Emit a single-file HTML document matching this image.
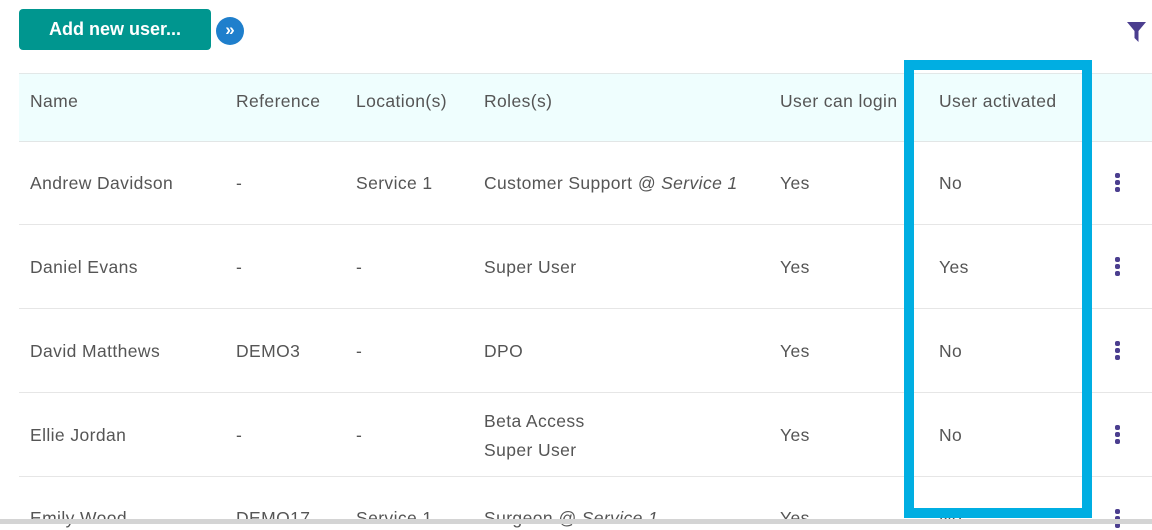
<!DOCTYPE html>
<html><head><style>
body{margin:0;width:1152px;height:524px;overflow:hidden;background:#fff;font-family:"Liberation Sans",sans-serif;color:#555;position:relative}
.btn{position:absolute;left:19px;top:9px;width:192px;height:41px;background:#00968f;border-radius:4px;color:#fff;font-weight:bold;font-size:18px;line-height:41px;text-align:center}
.circ{position:absolute;left:216px;top:17px;width:28px;height:28px;border-radius:50%;background:#1f7fcc;color:#fff;font-size:17px;line-height:26px;text-align:center;font-weight:bold}
.hdr{position:absolute;left:19px;right:0;top:73px;height:67px;background:#effefe;border-top:1px solid #e2e8e8;border-bottom:1px solid #e2e6e6}
.t{position:absolute;font-size:17.5px;letter-spacing:0.4px;white-space:nowrap}
.line{position:absolute;left:19px;right:0;height:1px;background:#e6e6e6}
.keb{position:absolute;left:1115px;width:6px}
.keb i{display:block;width:5px;height:5px;background:#4b3e8f;border-radius:2px;margin-bottom:2px}
.box{position:absolute;left:904px;top:60px;width:178px;height:448px;border:5px solid #00aee2;outline:5px solid #00aee2;outline-offset:-10px}
.bot{position:absolute;left:0;right:0;top:519px;height:5px;background:#d4d4d4}
</style></head><body>
<div class="btn">Add new user...</div>
<div class="circ">»</div>
<svg style="position:absolute;left:1127px;top:22px" width="19" height="20" viewBox="0 0 19 20"><path d="M0 0H19L11.5 9V20L7.5 16V9Z" fill="#4b3e8f"/></svg>
<div class="hdr"></div>
<div class="t" style="left:30px;top:91px">Name</div>
<div class="t" style="left:236px;top:91px">Reference</div>
<div class="t" style="left:356px;top:91px">Location(s)</div>
<div class="t" style="left:484px;top:91px">Roles(s)</div>
<div class="t" style="left:780px;top:91px">User can login</div>
<div class="t" style="left:939px;top:91px">User activated</div>

<div class="t" style="left:30px;top:173px">Andrew Davidson</div><div class="t" style="left:236px;top:173px">-</div><div class="t" style="left:356px;top:173px">Service 1</div><div class="t" style="left:484px;top:173px">Customer Support <i>@ Service 1</i></div><div class="t" style="left:780px;top:173px">Yes</div><div class="t" style="left:939px;top:173px">No</div>
<div class="keb" style="top:173px"><i></i><i></i><i></i></div>
<div class="line" style="top:224px"></div>
<div class="t" style="left:30px;top:257px">Daniel Evans</div><div class="t" style="left:236px;top:257px">-</div><div class="t" style="left:356px;top:257px">-</div><div class="t" style="left:484px;top:257px">Super User</div><div class="t" style="left:780px;top:257px">Yes</div><div class="t" style="left:939px;top:257px">Yes</div>
<div class="keb" style="top:257px"><i></i><i></i><i></i></div>
<div class="line" style="top:308px"></div>
<div class="t" style="left:30px;top:341px">David Matthews</div><div class="t" style="left:236px;top:341px">DEMO3</div><div class="t" style="left:356px;top:341px">-</div><div class="t" style="left:484px;top:341px">DPO</div><div class="t" style="left:780px;top:341px">Yes</div><div class="t" style="left:939px;top:341px">No</div>
<div class="keb" style="top:341px"><i></i><i></i><i></i></div>
<div class="line" style="top:392px"></div>
<div class="t" style="left:30px;top:425px">Ellie Jordan</div><div class="t" style="left:236px;top:425px">-</div><div class="t" style="left:356px;top:425px">-</div><div class="t" style="left:484px;top:411px">Beta Access</div><div class="t" style="left:484px;top:440px">Super User</div><div class="t" style="left:780px;top:425px">Yes</div><div class="t" style="left:939px;top:425px">No</div>
<div class="keb" style="top:425px"><i></i><i></i><i></i></div>
<div class="line" style="top:476px"></div>
<div class="t" style="left:30px;top:508px">Emily Wood</div><div class="t" style="left:236px;top:508px">DEMO17</div><div class="t" style="left:356px;top:508px">Service 1</div><div class="t" style="left:484px;top:508px">Surgeon <i>@ Service 1</i></div><div class="t" style="left:780px;top:508px">Yes</div><div class="t" style="left:939px;top:508px">No</div>
<div class="keb" style="top:509px"><i></i><i></i><i></i></div>
<div class="box"></div>
<div class="bot"></div>
</body></html>
